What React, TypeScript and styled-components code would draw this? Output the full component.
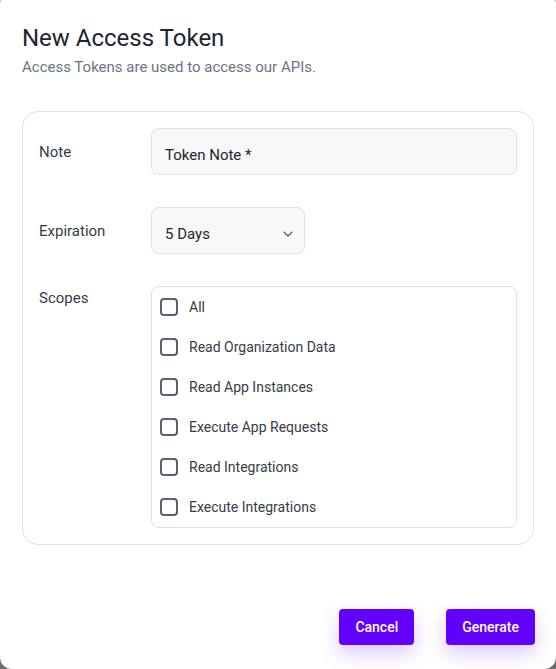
import React from "react";
import styled, { createGlobalStyle } from "styled-components";

const Global = createGlobalStyle`
  html, body { margin: 0; padding: 0; height: 100%; }
  body {
    background: #6b6e74;
    font-family: Roboto, "Liberation Sans", Arial, sans-serif;
    overflow: hidden;
  }
  * { box-sizing: border-box; }
`;

const Modal = styled.div`
  width: 556px;
  height: 677px;
  margin-top: -8px;
  background: #ffffff;
  border-radius: 12px;
  padding: 30px 21px 24px 22px;
  display: flex;
  flex-direction: column;
`;

const Title = styled.h2`
  margin: 0;
  font-size: 24px;
  font-weight: 400;
  line-height: 32px;
  color: #1e2532;
`;

const Subtitle = styled.p`
  margin: 2px 0 0;
  font-size: 15px;
  line-height: 22px;
  color: #6b7585;
`;

const Card = styled.div`
  margin-top: 33px;
  border: 1px solid #e2e2e2;
  border-radius: 16px;
  padding: 16px;
  display: flex;
  flex-direction: column;
  gap: 32px;
  width: 512px;
`;

const Row = styled.div<{ $top?: boolean }>`
  display: grid;
  grid-template-columns: 112px 1fr;
  align-items: ${(p) => (p.$top ? "start" : "center")};
`;

const Label = styled.div<{ $top?: boolean }>`
  font-size: 15px;
  line-height: 22px;
  color: #353c48;
  padding-top: ${(p) => (p.$top ? "1px" : "0")};
  margin-top: ${(p) => (p.$top ? "0" : "1px")};
`;

const Field = styled.div<{ $width?: string }>`
  height: 47px;
  width: ${(p) => p.$width || "100%"};
  background: #f8f8f8;
  border: 1px solid #e0e0e0;
  border-radius: 8px;
  padding: 0 13px;
  display: flex;
  align-items: center;
  justify-content: space-between;
  font-size: 15px;
  color: #1f2530;
`;

const FieldText = styled.span`
  padding-top: 7px;
`;

const Chevron = styled.svg`
  width: 16px;
  height: 16px;
  margin-top: 7px;
  margin-right: -5px;
`;

const ScopeBox = styled.div`
  border: 1px solid #e0e0e0;
  border-radius: 8px;
  display: flex;
  flex-direction: column;
`;

const ScopeRow = styled.label`
  height: 40px;
  display: flex;
  align-items: center;
  padding-left: 8px;
  gap: 11px;
  font-size: 14px;
  color: #353c48;
`;

const Box = styled.span`
  width: 18px;
  height: 18px;
  border: 2px solid #566173;
  border-radius: 4px;
  flex: none;
`;

const Footer = styled.div`
  margin-top: auto;
  display: flex;
  justify-content: flex-end;
  gap: 32px;
`;

const Button = styled.button`
  height: 36px;
  padding: 0 16px;
  border: none;
  border-radius: 4px;
  background: #6100ff;
  color: #ffffff;
  font-family: Roboto, "Liberation Sans", Arial, sans-serif;
  font-size: 14px;
  font-weight: 500;
  box-shadow: 0 8px 20px rgba(97, 0, 255, 0.22);
  cursor: pointer;
`;

const scopes = [
  "All",
  "Read Organization Data",
  "Read App Instances",
  "Execute App Requests",
  "Read Integrations",
  "Execute Integrations",
];

export default function App() {
  return (
    <>
      <Global />
      <Modal>
        <Title>New Access Token</Title>
        <Subtitle>Access Tokens are used to access our APIs.</Subtitle>
        <Card>
          <Row>
            <Label>Note</Label>
            <Field>
              <FieldText>Token Note *</FieldText>
            </Field>
          </Row>
          <Row>
            <Label>Expiration</Label>
            <Field $width="154px">
              <FieldText>5 Days</FieldText>
              <Chevron viewBox="0 0 24 24" fill="none" stroke="#4b5563" strokeWidth="1.6" strokeLinecap="round" strokeLinejoin="round">
                <path d="M6 9l6 6 6-6" />
              </Chevron>
            </Field>
          </Row>
          <Row $top>
            <Label $top>Scopes</Label>
            <ScopeBox>
              {scopes.map((s) => (
                <ScopeRow key={s}>
                  <Box />
                  {s}
                </ScopeRow>
              ))}
            </ScopeBox>
          </Row>
        </Card>
        <Footer>
          <Button>Cancel</Button>
          <Button>Generate</Button>
        </Footer>
      </Modal>
    </>
  );
}
